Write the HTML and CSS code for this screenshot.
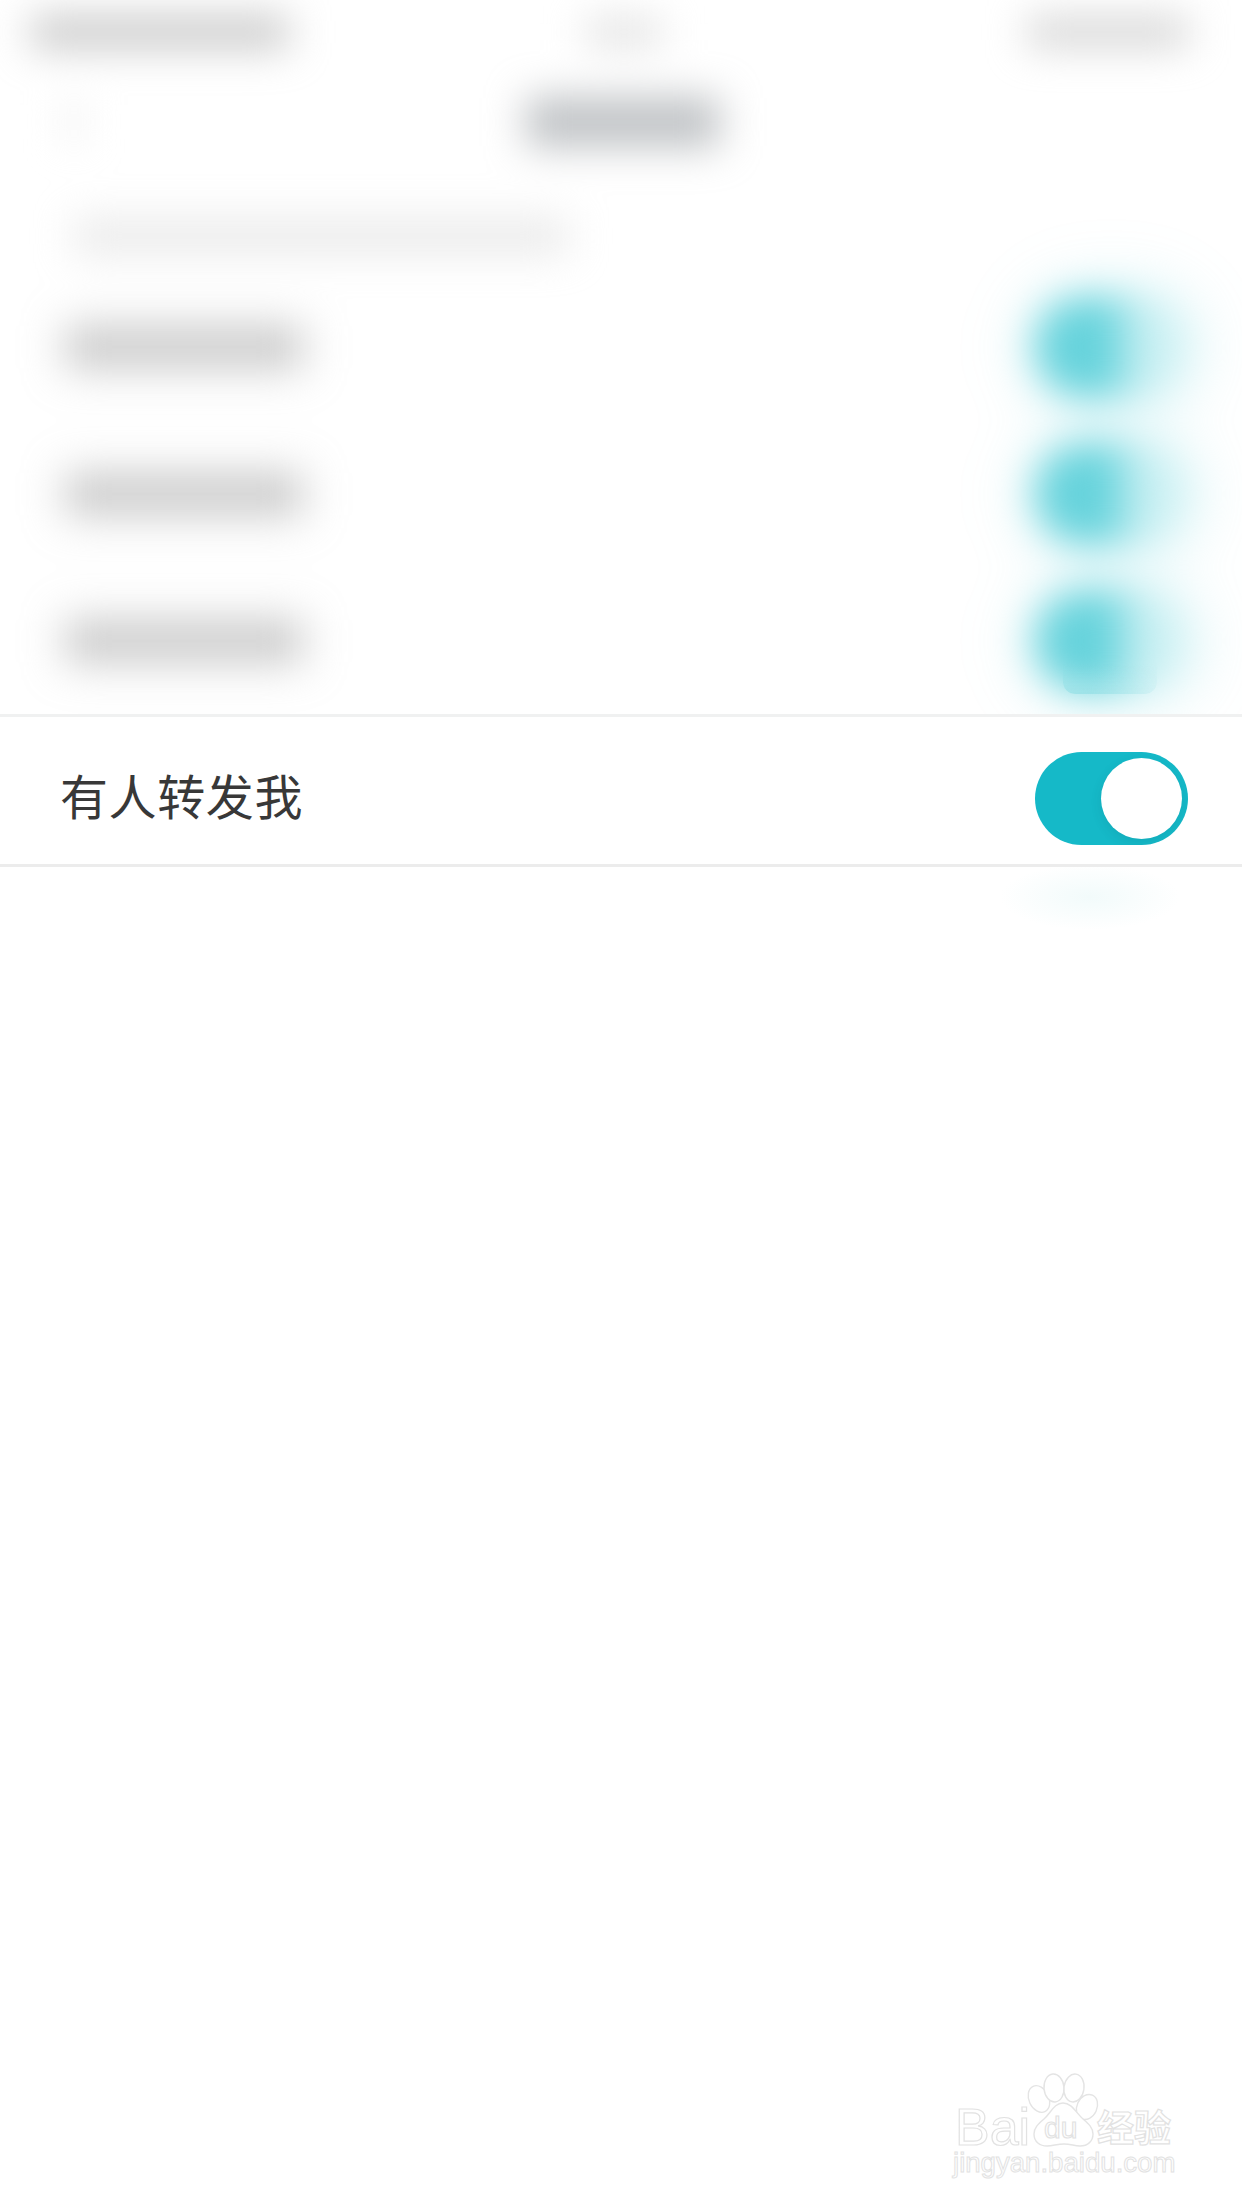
FILE: index.html
```html
<!DOCTYPE html>
<html lang="zh-CN">
<head>
<meta charset="utf-8">
<title>有人转发我</title>
<link rel="stylesheet" href="styles.css">
</head>
<body>
<div class="page">
  <div class="backdrop" aria-hidden="true">
    <div class="status">
      <span class="blob carrier"></span>
      <span class="blob time"></span>
      <span class="blob battery"></span>
    </div>
    <div class="nav">
      <span class="blob back"></span>
      <span class="blob title"></span>
    </div>
    <div class="section"><span class="blob section-label"></span></div>
    <div class="ghost-row"><span class="blob label"></span><span class="ghost-toggle"></span></div>
    <div class="ghost-row"><span class="blob label"></span><span class="ghost-toggle"></span></div>
    <div class="ghost-row"><span class="blob label"></span><span class="ghost-toggle"></span></div>
  </div>
  <div class="ghost-cut" aria-hidden="true"></div>
  <div class="ghost-below" aria-hidden="true"></div>

  <main class="content">
    <div class="setting-row">
      <span class="setting-name">有人转发我</span>
      <span class="switch"><span class="knob"></span></span>
    </div>
  </main>

  <svg class="watermark" viewBox="0 0 240 110" width="240" height="110">
    <g class="paw">
      <ellipse cx="85" cy="23" rx="10" ry="14" transform="rotate(-25 85 23)"/>
      <ellipse cx="100" cy="12" rx="10" ry="14" transform="rotate(-5 100 12)"/>
      <ellipse cx="120" cy="12" rx="10" ry="14" transform="rotate(8 120 12)"/>
      <ellipse cx="133" cy="31" rx="10" ry="13" transform="rotate(25 133 31)"/>
      <path d="M109 27c-9 0-12 10-19 16-6 5-10 9-10 15 0 8 6 12 13 12 6 0 10-2 17-2s10 2 16 2c8 0 13-5 13-12 0-6-4-10-10-15-7-6-11-16-20-16z"/>
    </g>
    <text class="wm-logo" x="1" y="69">Bai</text>
    <text class="wm-du" x="90" y="62">du</text>
    <text class="wm-cn" x="143" y="66">经验</text>
    <text class="wm-url" x="-1" y="96">jingyan.baidu.com</text>
  </svg>
</div>
</body>
</html>
```
FILE: styles.css
```css
* { box-sizing: border-box; }
html, body { margin: 0; padding: 0; background: #fff; }

.page {
  position: relative;
  width: 1242px;
  height: 2208px;
  overflow: hidden;
  background: #fff;
  font-family: "Noto Sans CJK SC", "Noto Sans", sans-serif;
}

/* blurred screen underneath */
.backdrop {
  position: absolute;
  top: 0;
  left: 0;
  width: 1242px;
  height: 714px;
  display: flex;
  flex-direction: column;
  filter: blur(19px);
}
.blob { display: block; }
.status {
  display: flex;
  align-items: center;
  height: 66px;
  padding: 0 54px 0 32px;
}
.carrier { width: 256px; height: 30px; background: #c8c8c8; box-shadow: 0 0 40px 10px rgba(0,0,0,.03); }
.time { width: 76px; height: 28px; background: #e2e2e2; margin-left: 298px; }
.battery { width: 160px; height: 28px; background: #d4d4d4; margin-left: auto; box-shadow: 0 0 40px 10px rgba(0,0,0,.02); }
.nav {
  display: flex;
  align-items: center;
  height: 118px;
  padding-left: 66px;
}
.back { width: 16px; height: 36px; background: #ececec; }
.title { width: 192px; height: 48px; background: #bfc2c5; margin-left: 445px; box-shadow: 0 0 40px 10px rgba(0,0,0,.03); }
.section {
  height: 94px;
  padding: 42px 0 0 76px;
}
.section-label { width: 490px; height: 28px; background: #e8e8e8; box-shadow: 0 0 40px 12px rgba(0,0,0,.025); }
.ghost-row {
  display: flex;
  align-items: center;
  justify-content: space-between;
  height: 150px;
  padding: 0 54px 0 66px;
}
.label { width: 236px; height: 42px; background: #cdcdcd; box-shadow: 0 0 50px 16px rgba(0,0,0,.03); }
.ghost-toggle {
  display: block;
  width: 153px;
  height: 100px;
  border-radius: 48px;
  background: linear-gradient(90deg, #66d3dc 0, #66d3dc 50%, #bcecf0 62%, #d8f4f6 100%);
  box-shadow: 0 0 50px 12px rgba(110, 213, 222, .22);
}
.ghost-cut {
  position: absolute;
  top: 664px;
  left: 1063px;
  width: 94px;
  height: 30px;
  border-radius: 0 0 12px 12px;
  background: linear-gradient(180deg, rgba(132,219,226,0), rgba(132,219,226,.5));
  -webkit-mask-image: linear-gradient(90deg, #000 30%, rgba(0,0,0,.25));
  mask-image: linear-gradient(90deg, #000 30%, rgba(0,0,0,.25));
}
.ghost-below {
  position: absolute;
  top: 864px;
  left: 1000px;
  width: 180px;
  height: 66px;
  border-radius: 50%;
  background: radial-gradient(closest-side, #f2fbfb, rgba(255,255,255,0));
}

/* sharp row */
.content {
  position: relative;
  padding-top: 714px;
}
.setting-row {
  display: flex;
  align-items: center;
  justify-content: space-between;
  height: 153px;
  padding: 16px 54px 0 60px;
  background: #fff;
  border-top: 3px solid #f0f1f1;
  border-bottom: 3px solid #ececec;
}
.setting-name {
  font-size: 48px;
  line-height: 64px;
  letter-spacing: .6px;
  font-weight: 400;
  color: #383838;
  padding-bottom: 9px;
}
.switch {
  display: flex;
  align-items: center;
  justify-content: flex-end;
  width: 153px;
  height: 93px;
  padding-right: 6px;
  border-radius: 47px;
  background: #15b9c8;
  overflow: hidden;
}
.knob {
  display: block;
  width: 81px;
  height: 81px;
  border-radius: 50%;
  background: #fff;
  box-shadow: 0 4px 12px rgba(0, 60, 70, .1);
}

/* watermark */
.watermark {
  position: absolute;
  top: 2076px;
  left: 954px;
  overflow: visible;
}
.paw ellipse, .paw path {
  fill: #fff;
  stroke: #e4e4e4;
  stroke-width: 1.4;
}
.wm-logo, .wm-du, .wm-cn, .wm-url {
  fill: #fff;
  stroke: #e2e2e2;
  stroke-width: 1.2;
  font-family: "Liberation Sans", sans-serif;
}
.wm-logo { font-size: 52px; }
.wm-du { font-size: 30px; }
.wm-cn { font-size: 37px; font-family: "Noto Sans CJK SC", sans-serif; font-weight: 700; }
.wm-url { font-size: 27.6px; stroke-width: 1; }
```
